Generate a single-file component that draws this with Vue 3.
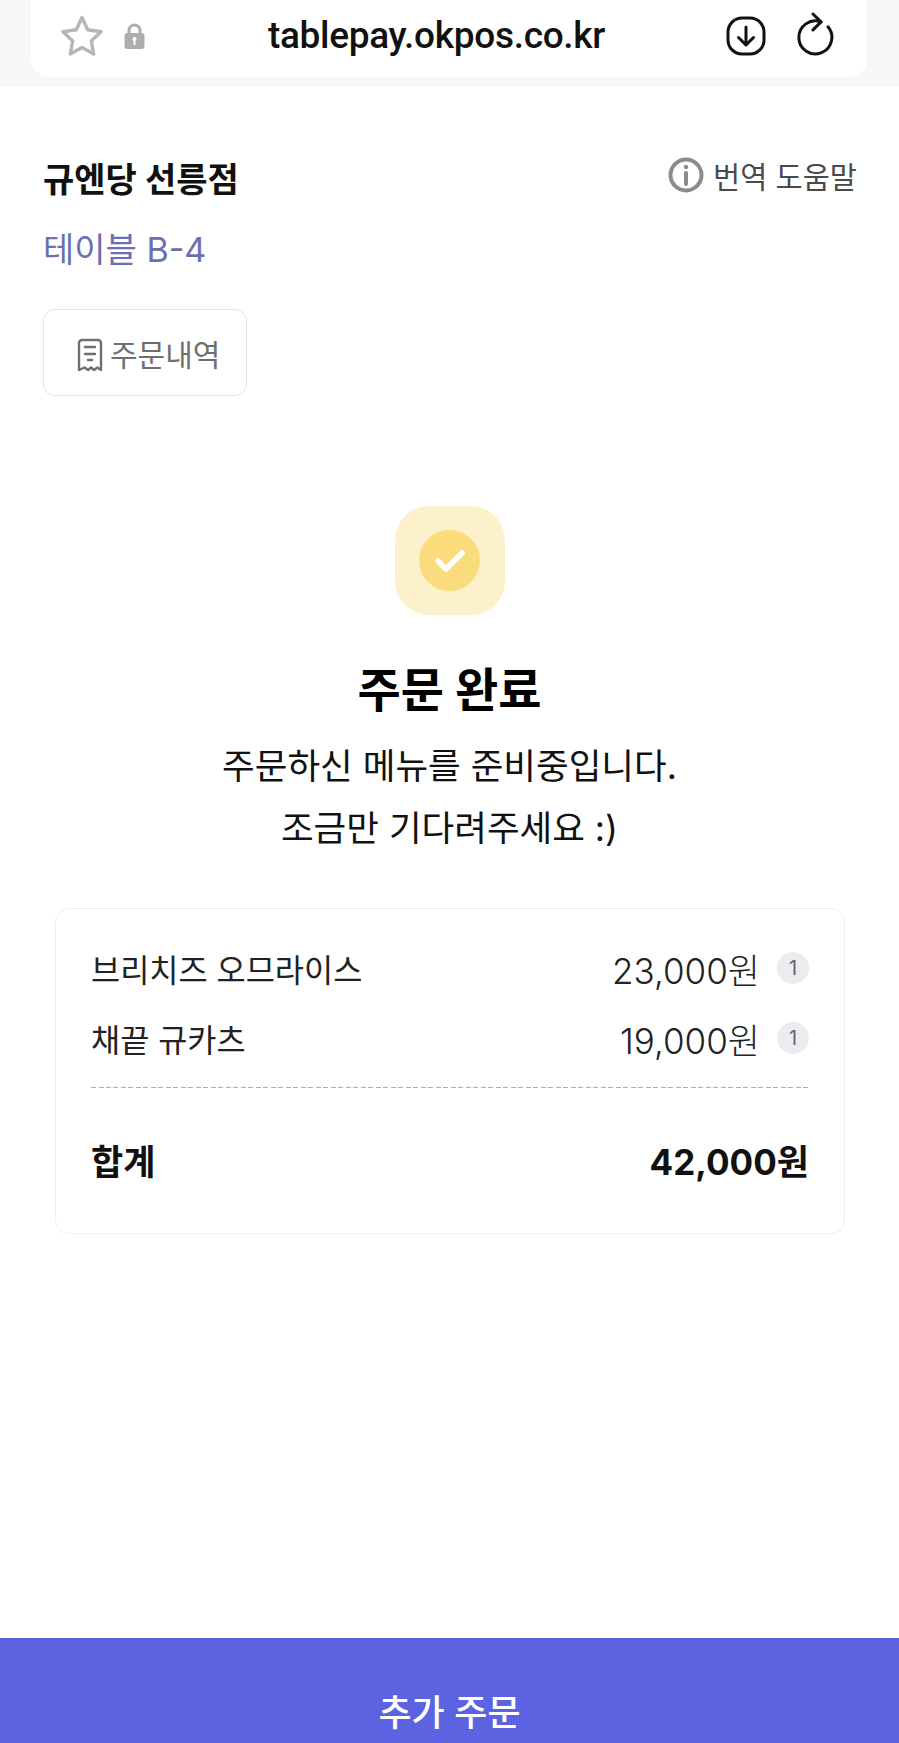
<template>
  <div class="page">
    <!-- browser bar -->
    <div class="browser">
      <div class="address">
        <svg class="star" viewBox="0 0 42 41" width="42" height="41" fill="none" stroke="#b6b6b6" stroke-width="3.400" stroke-linejoin="round">
          <path d="M21 2.500l5.700 12.300 13.300 1.900-9.700 9.200 2.400 13.100L21 32.500 9.300 39l2.400-13.100L2 16.700l13.300-1.900z" />
        </svg>
        <svg class="lock" viewBox="0 0 21 26" width="21" height="26">
          <path d="M5 11V7.500a5.500 5.500 0 0 1 11 0V11" fill="none" stroke="#adadad" stroke-width="3" />
          <rect x="0.500" y="10" width="20" height="16" rx="3" fill="#adadad" />
          <circle cx="10.500" cy="16" r="2" fill="#fff" />
          <rect x="9.500" y="16" width="2" height="6" fill="#fff" />
        </svg>
        <span class="url">tablepay.okpos.co.kr</span>
        <svg class="download" viewBox="0 0 40 40" width="40" height="40" fill="none" stroke="#111" stroke-width="3" stroke-linecap="round" stroke-linejoin="round">
          <rect x="2" y="2" width="36" height="36" rx="14" />
          <path d="M20 11v18M12.500 21.500L20 29l7.500-7.500" />
        </svg>
        <svg class="reload" viewBox="0 0 38 44" width="38" height="44" fill="none" stroke="#111" stroke-width="3" stroke-linecap="round" stroke-linejoin="round">
          <path d="M24 9.900A16.500 16.500 0 1 0 31 14.800" />
          <path d="M16 2l8 7.900-8 8" />
        </svg>
      </div>
    </div>

    <header class="head">
      <div class="head-left">
        <h1 class="store">규엔당 선릉점</h1>
        <p class="table">테이블 B-4</p>
        <button class="history">
          <svg viewBox="0 0 26 34" width="26" height="34" fill="none" stroke="#6f6f6f" stroke-width="2.400" stroke-linejoin="round">
            <path d="M2 32V5a3 3 0 0 1 3-3h16a3 3 0 0 1 3 3v27l-3.600-2.500-3.400 2.500-3-2.500-3 2.500-3.400-2.500z" />
            <path d="M8 9h10M8 16h10M11 22h4" stroke-linecap="round" />
          </svg>
          <span>주문내역</span>
        </button>
      </div>
      <div class="help">
        <svg viewBox="0 0 36 36" width="36" height="36" fill="none" stroke="#8c8c8c">
          <circle cx="18" cy="18" r="15.500" stroke-width="4" />
          <path d="M18 16v11" stroke-width="4" stroke-linecap="round" />
          <circle cx="18" cy="10" r="2.200" fill="#8c8c8c" stroke="none" />
        </svg>
        <span>번역 도움말</span>
      </div>
    </header>

    <section class="done">
      <div class="badge">
        <div class="circle">
          <svg viewBox="0 0 32 26" width="32" height="26" fill="none" stroke="#fff" stroke-width="5.500" stroke-linecap="round" stroke-linejoin="round">
            <path d="M4 13l8 8L28 5" />
          </svg>
        </div>
      </div>
      <h2 class="done-title">주문 완료</h2>
      <p class="done-text">주문하신 메뉴를 준비중입니다.<br />조금만 기다려주세요 :)</p>
    </section>

    <section class="card">
      <div v-for="item in items" :key="item.name" class="row">
        <span class="name">{{ item.name }}</span>
        <span class="price">{{ item.price }}</span>
        <span class="qty">{{ item.qty }}</span>
      </div>
      <div class="dash"></div>
      <div class="total">
        <span>합계</span>
        <span>42,000원</span>
      </div>
    </section>

    <button class="more">추가 주문</button>
  </div>
</template>

<script setup>
const items = [
  { name: "브리치즈 오므라이스", price: "23,000원", qty: 1 },
  { name: "채끝 규카츠", price: "19,000원", qty: 1 },
];
</script>

<style>
html,
body {
  margin: 0;
  background: #fff;
}
</style>

<style scoped>
.page {
  display: flex;
  flex-direction: column;
  width: 899px;
  height: 1743px;
  overflow: hidden;
  background: #fff;
  font-family: Inter, "Noto Sans CJK KR", sans-serif;
  color: #111;
}

.browser {
  height: 87px;
  padding: 0 32px 10px 31px;
  box-sizing: border-box;
  background: #f7f7f7;
}
.address {
  display: flex;
  align-items: center;
  height: 77px;
  padding: 0 32px 6px 30px;
  box-sizing: border-box;
  background: #fff;
  border-radius: 0 0 18px 18px;
}
.star {
  margin: 0 21px 0 0;
}
.url {
  flex: 1;
  padding-left: 2px;
  text-align: center;
  font-family: Roboto, sans-serif;
  font-size: 37px;
  font-weight: 500;
  letter-spacing: -0.3px;
  color: #111;
}
.download {
  margin-right: 31px;
}
.reload {
  margin: -4px 0 0;
}

.head {
  display: flex;
  justify-content: space-between;
  padding: 68px 42px 0 43px;
}
.store {
  margin: 0;
  font-size: 34px;
  line-height: 50px;
  font-weight: 700;
  color: #111;
}
.table {
  margin: 20px 0 0;
  font-size: 34px;
  line-height: 50px;
  font-weight: 400;
  color: #6b6fb0;
}
.history {
  display: flex;
  align-items: center;
  gap: 7px;
  width: 204px;
  height: 87px;
  margin-top: 34px;
  padding: 0 0 0 33px;
  box-sizing: border-box;
  background: #fff;
  border: 1px solid #e5e5e5;
  border-radius: 12px;
  font-family: inherit;
  font-size: 30px;
  color: #6f6f6f;
}
.history svg {
  margin-top: 4px;
}
.help {
  display: flex;
  align-items: center;
  gap: 9px;
  height: 44px;
  margin-top: -2px;
  font-size: 29.500px;
  color: #4a4a4a;
}

.done {
  display: flex;
  flex-direction: column;
  align-items: center;
  margin-top: 110px;
}
.badge {
  display: flex;
  align-items: center;
  justify-content: center;
  width: 110px;
  height: 109px;
  background: #fdf1cb;
  border-radius: 34px;
}
.circle {
  display: flex;
  align-items: center;
  justify-content: center;
  width: 61px;
  height: 61px;
  background: #fbdc7c;
  border-radius: 50%;
}
.done-title {
  margin: 45px 0 0;
  font-size: 47px;
  line-height: 60px;
  font-weight: 700;
  color: #000;
}
.done-text {
  margin: 16px 0 0;
  text-align: center;
  font-size: 35.500px;
  line-height: 62px;
  color: #111;
}

.card {
  margin: 48px 54px 0 55px;
  padding: 24px 35px 0;
  height: 326px;
  box-sizing: border-box;
  border: 1px solid #f0f0f2;
  border-radius: 14px;
}
.row {
  display: flex;
  align-items: center;
  height: 70px;
  font-size: 31.700px;
  color: #222;
}
.name {
  flex: 1;
}
.price {
  font-size: 35px;
  font-weight: 300;
}
.qty {
  display: flex;
  align-items: center;
  justify-content: center;
  width: 32px;
  height: 32px;
  margin-left: 17px;
  border-radius: 50%;
  background: #ebecef;
  font-size: 20px;
  color: #666;
}
.dash {
  height: 1px;
  margin-top: 14px;
  background: repeating-linear-gradient(90deg, #b0b0b0 0 5px, transparent 5px 7.500px);
}
.total {
  display: flex;
  justify-content: space-between;
  align-items: center;
  height: 130px;
  margin-top: 6px;
  font-size: 35px;
  font-weight: 700;
  color: #111;
}

.more {
  margin-top: auto;
  height: 105px;
  padding: 38px 0 0;
  border: 0;
  background: #5c63e0;
  font-family: inherit;
  font-size: 36px;
  font-weight: 500;
  color: #fff;
}
</style>
